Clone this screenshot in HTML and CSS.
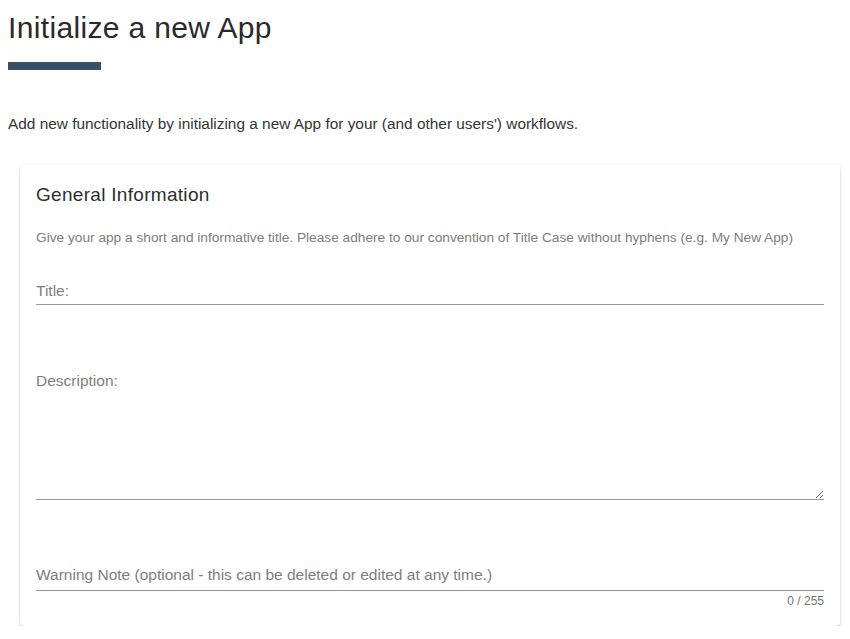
FILE: index.html
```html
<!DOCTYPE html>
<html lang="en">
<head>
<meta charset="utf-8">
<title>Initialize a new App</title>
<link rel="stylesheet" href="styles.css">
</head>
<body>
<main class="page">
  <h1 class="page-title">Initialize a new App</h1>
  <div class="title-bar"></div>
  <p class="intro">Add new functionality by initializing a new App for your (and other users') workflows.</p>

  <section class="card">
    <h2 class="card-title">General Information</h2>
    <p class="hint">Give your app a short and informative title. Please adhere to our convention of Title Case without hyphens (e.g. My New App)</p>

    <div class="field field-title">
      <input class="text-input title-input" type="text" placeholder="Title:">
    </div>

    <div class="field field-description">
      <textarea class="text-area" placeholder="Description:"></textarea>
    </div>

    <div class="field field-warning">
      <input class="text-input warning-input" type="text" maxlength="255" placeholder="Warning Note (optional - this can be deleted or edited at any time.)">
      <div class="counter">0 / 255</div>
    </div>
  </section>
</main>
</body>
</html>
```

FILE: styles.css
```css
html, body {
  background: #ffffff;
}

body {
  margin: 8px;
  font-family: "Liberation Sans", Arial, sans-serif;
  color: rgba(0, 0, 0, 0.87);
}

.page-title {
  margin: 4px 0 0;
  font-size: 30px;
  line-height: 32px;
  font-weight: 400;
  letter-spacing: 0.35px;
  color: #2a2a2a;
}

.title-bar {
  margin-top: 18px;
  width: 93px;
  height: 8px;
  background: #3a5069;
}

.intro {
  margin: 45px 0 0;
  font-size: 15.4px;
  line-height: 18px;
  color: #333333;
}

.card {
  margin: 32px 2px 0 12px;
  padding: 18px 16px 18px 16px;
  background: #ffffff;
  border-radius: 4px;
  box-shadow: 0 3px 1px -2px rgba(0, 0, 0, 0.2),
              0 2px 2px 0 rgba(0, 0, 0, 0.14),
              0 1px 5px 0 rgba(0, 0, 0, 0.12);
}

.card-title {
  margin: 0;
  font-size: 19px;
  line-height: 24px;
  font-weight: 400;
  letter-spacing: 0.3px;
  color: #2e2e2e;
}

.hint {
  margin: 23px 0 0;
  font-size: 13.7px;
  line-height: 16px;
  color: #7d7d7d;
}

.field {
  display: block;
}

.text-input,
.text-area {
  display: block;
  width: 100%;
  box-sizing: border-box;
  margin: 0;
  border: 0;
  border-bottom: 1px solid #959595;
  border-radius: 0;
  background: transparent;
  font-family: "Liberation Sans", Arial, sans-serif;
  font-size: 15.5px;
  line-height: 18px;
  color: rgba(0, 0, 0, 0.87);
  outline: none;
}

.text-input::placeholder,
.text-area::placeholder {
  color: #7e7e7e;
  opacity: 1;
}

.field-title {
  margin-top: 36px;
}

.title-input {
  height: 23px;
  padding: 0 0 4px;
}

.field-description {
  margin-top: 67px;
}

.text-area {
  height: 128px;
  padding: 0;
  resize: vertical;
}

.field-warning {
  margin-top: 66px;
}

.warning-input {
  height: 25px;
  padding: 0 0 6px;
}

.counter {
  margin-top: 3px;
  text-align: right;
  font-size: 12px;
  line-height: 14px;
  color: #727272;
}
```
